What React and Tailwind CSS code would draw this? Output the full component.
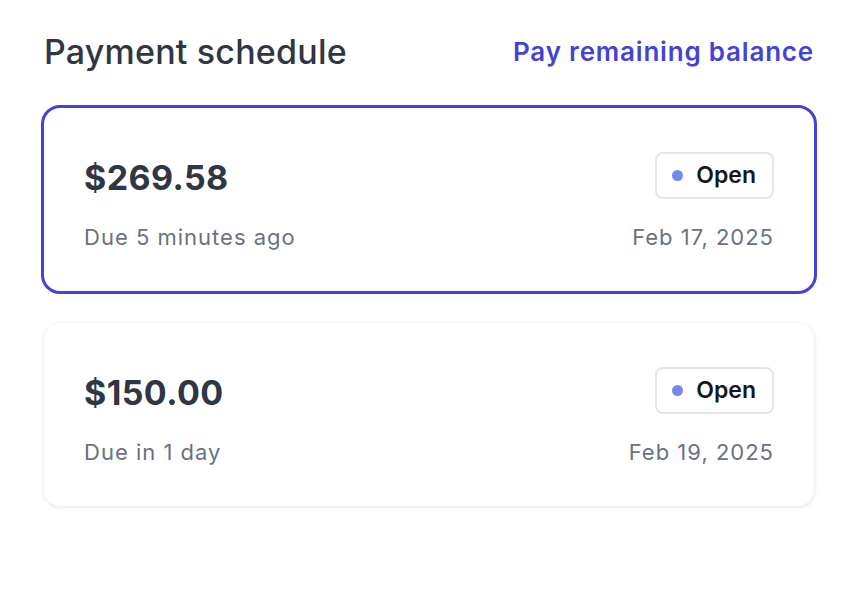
export default function App() {
  const payments = [
    { amount: '$269.58', due: 'Due 5 minutes ago', date: 'Feb 17, 2025', selected: true },
    { amount: '$150.00', due: 'Due in 1 day', date: 'Feb 19, 2025', selected: false },
  ];

  return (
    <div className="min-h-screen bg-white px-11 pt-8" style={{ fontFamily: 'Inter, "Noto Sans", sans-serif' }}>
      {/* Header */}
      <div className="flex items-center justify-between mb-9">
        <h2 className="text-[34px] leading-10 font-medium tracking-[0.2px] text-[#2f3644]">Payment schedule</h2>
        <a href="#" className="text-[26px] leading-8 font-semibold tracking-[0.8px] text-[#4343d6]">
          Pay remaining balance
        </a>
      </div>

      {/* Payments */}
      <div className="flex flex-col gap-8">
        {payments.map((p) => (
          <div
            key={p.amount}
            className={`rounded-2xl bg-white px-10 pt-11 pb-[38px] ${
              p.selected
                ? 'outline-[3px] outline-solid outline-[#4343d6]'
                : 'shadow-[0_1px_4px_rgba(0,0,0,0.12)]'
            }`}
          >
            <div className="flex items-center justify-between h-[46px]">
              <span className="text-[34px] font-bold tracking-[0.4px] text-[#2f3644] translate-y-[2px]">{p.amount}</span>
              <span className="flex items-center gap-[13px] h-[47px] pl-[15px] pr-4 rounded-lg border-2 border-[#e4e4eb] text-[23px] font-semibold text-[#15171c]">
                <span className="w-[11px] h-[11px] rounded-full bg-[#7787f2]"></span>
                Open
              </span>
            </div>
            <div className="flex items-center justify-between mt-[23px] h-8 text-[22px] tracking-[1px] text-[#6b7280]">
              <span>{p.due}</span>
              <span>{p.date}</span>
            </div>
          </div>
        ))}
      </div>
    </div>
  );
}
